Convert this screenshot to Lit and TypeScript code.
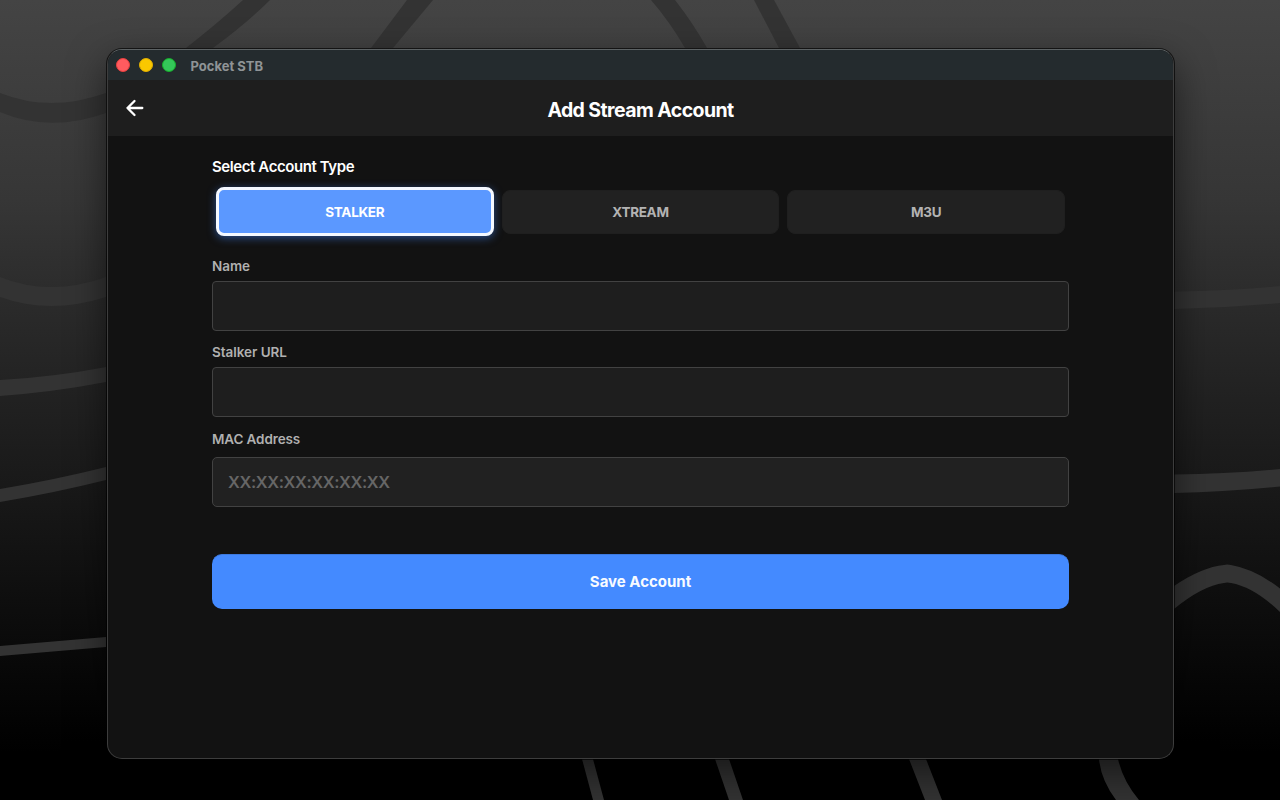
import { LitElement, html, css, svg } from "lit";
import { customElement, state } from "lit/decorators.js";
import { classMap } from "lit/directives/class-map.js";

@customElement("desk-wallpaper")
class DeskWallpaper extends LitElement {
  static styles = css`
    :host { display: block; width: 100%; height: 100%; }
    .art { display: block; width: 100%; height: 100%; }
  `;

  private bands = [
    "M243 0H270Q246 24 213 48H186Q218 23 243 0Z",
    "M407 0H433L393 48H371Z",
    "M651 0H675Q693 23 707 48H685Q670 22 651 0Z",
    "M754 0H774L800 48H779Z",
    "M0 93Q50 113 106 93V113Q50 133 0 112Z",
    "M0 277Q50 297 106 277V297Q50 315 0 297Z",
    "M0 380Q54 377 106 367V382Q54 392 0 396Z",
    "M0 489Q54 480 106 467V480Q54 493 0 502Z",
    "M0 646L106 637V647L0 656Z",
    "M1174 291.5Q1227 291 1280 286V303Q1227 308 1174 309Z",
    "M1174 474.5Q1227 474 1280 469V486.500Q1227 492 1174 493Z",
    "M1174 586Q1202 567 1224 565Q1227 564 1231 565Q1255 569 1280 588.500V612Q1254 587 1231 583Q1227 582 1224 583Q1202 586 1174 609Z",
    "M1099 759H1118Q1123 781 1139 800H1116Q1101 780 1099 759Z",
    "M582 759H593L604 800H593Z",
    "M715 759H729L743 800H729Z",
    "M909 759H926L942 800H925Z",
  ];

  render() {
    return html`
      <svg class="art" viewBox="0 0 1280 800" preserveAspectRatio="none">
        <defs>
          <linearGradient id="sky" x1="0" y1="0" x2="0" y2="1">
            <stop offset="0" stop-color="#444444" />
            <stop offset=".25" stop-color="#363636" />
            <stop offset=".375" stop-color="#2b2b2b" />
            <stop offset=".5" stop-color="#212121" />
            <stop offset=".75" stop-color="#0e0e0e" />
            <stop offset=".94" stop-color="#000000" />
          </linearGradient>
        </defs>
        <rect width="1280" height="800" fill="url(#sky)" />
        ${this.bands.map((d) => svg`<path d=${d} fill="#333333" />`)}
      </svg>
    `;
  }
}

@customElement("app-root")
class AppRoot extends LitElement {
  static styles = css`
    :host {
      display: grid;
      width: 1280px;
      height: 800px;
      overflow: hidden;
      background: #000;
      font-family: Inter, "Open Sans", sans-serif;
      color: #fff;
    }
    * { box-sizing: border-box; }
    desk-wallpaper, .stage { grid-area: 1 / 1; min-width: 0; min-height: 0; }
    .stage { padding: 49px 106px 41px 107px; z-index: 1; }
    .window {
      height: 710px;
      display: flex;
      flex-direction: column;
      border: 1px solid #3d3d3d;
      border-top-color: #5c6264;
      border-radius: 15px;
      overflow: hidden;
      background: #121212;
      box-shadow: 0 0 0 1px rgba(0, 0, 0, .65), 0 14px 38px rgba(0, 0, 0, .55);
    }
    .titlebar {
      height: 30px;
      flex: none;
      display: flex;
      align-items: center;
      padding-left: 7.500px;
      background: #242b2e;
    }
    .lights { display: flex; gap: 9px; }
    .light { width: 14px; height: 14px; border-radius: 50%; border: 1px solid; }
    .red { background: #ff5b5f; border-color: #e8403f; }
    .yellow { background: #fac800; border-color: #e0ae00; }
    .green { background: #34c759; border-color: #16ad2c; }
    .app-name {
      margin-left: 15px;
      padding-top: 1px;
      font-size: 13px;
      line-height: 16px;
      font-weight: 700;
      color: #8f9496;
    }
    .header {
      height: 56px;
      flex: none;
      display: grid;
      grid-template-columns: 54px 1fr 54px;
      align-items: center;
      background: #1e1e1e;
    }
    .back {
      border: 0;
      padding: 0;
      background: none;
      justify-self: center;
      width: 24px;
      height: 24px;
      color: #fff;
    }
    .back svg { display: block; }
    .heading {
      margin: 0;
      padding-top: 3px;
      text-align: center;
      font-size: 19.500px;
      line-height: 26px;
      font-weight: 700;
      letter-spacing: -.58px;
    }
    .form { display: flex; flex-direction: column; padding: 20px 104px 0; }
    .section {
      font-size: 15px;
      line-height: 21px;
      font-weight: 600;
      letter-spacing: -.41px;
    }
    .types {
      display: grid;
      grid-template-columns: repeat(3, 1fr);
      align-items: center;
      height: 49px;
      margin-top: 10px;
      padding: 0 4px;
      gap: 8px;
    }
    .type {
      height: 44px;
      padding: 0;
      border: 1px solid #1f1f1f;
      border-radius: 8px;
      background: #212121;
      color: #b3b3b3;
      font: 700 13.500px/18px Inter, sans-serif;
      letter-spacing: -.3px;
    }
    .type.active {
      height: 49px;
      border: 3px solid #f4f8ff;
      background: #5b98ff;
      color: #fff;
      box-shadow: 0 2px 9px rgba(68, 138, 255, .5);
    }
    .label {
      font-size: 13.500px;
      line-height: 18px;
      font-weight: 600;
      letter-spacing: -.04px;
      color: #b0b0b0;
    }
    .name { margin-top: 21px; }
    .url { margin-top: 12px; }
    .mac { margin-top: 13px; letter-spacing: -.12px; }
    .input {
      width: 100%;
      height: 50px;
      margin: 6px 0 0;
      padding: 0 15px;
      border: 1px solid #424242;
      border-radius: 4px;
      outline: 0;
      background: #1e1e1e;
      color: #fff;
      font: 600 16.500px/22px Inter, sans-serif;
    }
    .mac-input { margin-top: 9px; background: #212121; border-radius: 5px; letter-spacing: -.42px; }
    .input::placeholder { color: #666; opacity: 1; }
    .save {
      height: 55px;
      margin-top: 47px;
      border: 1px solid #3d79de;
      border-width: 1px 0 0;
      border-radius: 10px;
      background: #448aff;
      color: #f8fbff;
      font: 700 15px/20px Inter, sans-serif;
    }
  `;

  @state() private selected = "STALKER";

  render() {
    return html`
      <desk-wallpaper></desk-wallpaper>
      <main class="stage">
        <section class="window">
          <div class="titlebar">
            <div class="lights">
              <span class="light red"></span>
              <span class="light yellow"></span>
              <span class="light green"></span>
            </div>
            <span class="app-name">Pocket STB</span>
          </div>
          <header class="header">
            <button class="back" aria-label="Back">
              <svg width="24" height="24" viewBox="0 0 24 24" fill="none" stroke="currentColor" stroke-width="2.3" stroke-linecap="round" stroke-linejoin="round">
                <path d="M11.500 5L4.500 12L11.500 19M4.500 12H19.300" />
              </svg>
            </button>
            <h1 class="heading">Add Stream Account</h1>
          </header>
          <div class="form">
            <div class="section">Select Account Type</div>
            <div class="types">
              ${["STALKER", "XTREAM", "M3U"].map(
                (t) => html`<button
                  class=${classMap({ type: true, active: t === this.selected })}
                  @click=${() => (this.selected = t)}
                >${t}</button>`
              )}
            </div>
            <label class="label name">Name</label>
            <input class="input" />
            <label class="label url">Stalker URL</label>
            <input class="input" />
            <label class="label mac">MAC Address</label>
            <input class="input mac-input" placeholder="XX:XX:XX:XX:XX:XX" />
            <button class="save">Save Account</button>
          </div>
        </section>
      </main>
    `;
  }
}
